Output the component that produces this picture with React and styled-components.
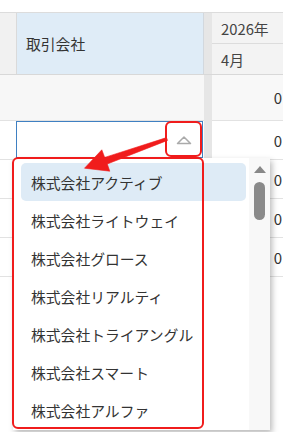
import React from "react";
import styled, { createGlobalStyle } from "styled-components";

const GlobalStyle = createGlobalStyle`
  body {
    margin: 0;
    background: #fff;
    font-family: "Noto Sans CJK JP", "Noto Sans", sans-serif;
    color: #333;
  }
`;

const Page = styled.div`
  position: relative;
  width: 283px;
  height: 432px;
  overflow: hidden;
  padding-top: 12px;
  box-sizing: border-box;
`;

const Sheet = styled.div`
  border-top: 1px solid #dcdcdc;
`;

const HeaderRow = styled.div`
  display: flex;
  height: 62px;
  box-sizing: border-box;
  border-bottom: 1px solid #d8d8d8;
`;

const Corner = styled.div`
  width: 17px;
  flex: none;
  box-sizing: border-box;
  background: #f1f1f1;
  border-right: 1px solid #dadada;
`;

const CompanyHead = styled.div`
  width: 187px;
  flex: none;
  box-sizing: border-box;
  display: flex;
  align-items: center;
  padding-left: 9px;
  background: #dfecf7;
  border-right: 1px solid #d2d8de;
  font-size: 14.8px;
`;

const Divider = styled.div`
  width: 8px;
  flex: none;
  background: #e6e6e6;
`;

const PeriodHead = styled.div`
  flex: 1;
  display: flex;
  flex-direction: column;
  background: #f3f3f3;
`;

const PeriodCell = styled.div`
  flex: 1;
  display: flex;
  align-items: center;
  padding-left: 9px;
  font-size: 14.8px;
  color: #444;
  border-bottom: ${(p) => (p.$first ? "1px solid #dcdcdc" : "none")};
`;

const Row = styled.div`
  display: flex;
  height: ${(p) => p.$height}px;
`;

const Lead = styled.div`
  width: 17px;
  flex: none;
  box-sizing: border-box;
  background: ${(p) => (p.$shade ? "#f7f7f7" : "#fff")};
  border-bottom: 1px solid #e2e2e2;
`;

const CompanyCell = styled.div`
  width: 187px;
  flex: none;
  box-sizing: border-box;
  background: ${(p) => (p.$shade ? "#f7f7f7" : "#fff")};
  border-bottom: 1px solid #e2e2e2;
`;

const ValueCell = styled.div`
  flex: 1;
  box-sizing: border-box;
  display: flex;
  align-items: center;
  justify-content: flex-end;
  padding-right: 1px;
  font-size: 15px;
  background: ${(p) => (p.$shade ? "#f8f8f8" : "#fff")};
  border-bottom: 1px solid #e2e2e2;
`;

const SelectWrap = styled.div`
  position: relative;
  width: 187px;
  height: 37px;
  margin-left: -1px;
  box-sizing: border-box;
  border: 1px solid #3f80c2;
  background: #fff;
  display: flex;
  justify-content: flex-end;
  align-items: center;
`;

const Toggle = styled.div`
  width: 36px;
  height: 100%;
  display: flex;
  align-items: center;
  justify-content: center;
`;

const Dropdown = styled.div`
  position: absolute;
  z-index: 10;
  top: 36px;
  left: -4px;
  width: 257px;
  height: 272px;
  display: flex;
  background: #fff;
  box-shadow: 2px 3px 6px rgba(0, 0, 0, 0.28);
`;

const List = styled.div`
  flex: 1;
  padding: 5px 3px 0 8px;
`;

const Item = styled.div`
  height: 38px;
  display: flex;
  align-items: center;
  padding-left: 10px;
  border-radius: 5px;
  font-size: 14.8px;
  color: #333;
  white-space: nowrap;
  background: ${(p) => (p.$active ? "#deebf6" : "transparent")};
`;

const ScrollTrack = styled.div`
  width: 21px;
  flex: none;
  background: #f8f8f8;
  display: flex;
  flex-direction: column;
  align-items: center;
  padding-top: 8px;
`;

const ScrollArrow = styled.div`
  width: 0;
  height: 0;
  border-left: 6.5px solid transparent;
  border-right: 6.5px solid transparent;
  border-bottom: 7px solid #888;
`;

const ScrollThumb = styled.div`
  margin-top: 9px;
  width: 11px;
  height: 38px;
  border-radius: 6px;
  background: #8a8a8a;
`;

const Highlight = styled.div`
  position: absolute;
  z-index: 20;
  left: ${(p) => p.$x}px;
  top: ${(p) => p.$y}px;
  width: ${(p) => p.$w}px;
  height: ${(p) => p.$h}px;
  box-sizing: border-box;
  border: 2px solid #f01c1c;
  border-radius: 6px;
  pointer-events: none;
`;

const Overlay = styled.svg`
  position: absolute;
  z-index: 21;
  left: 0;
  top: 0;
  pointer-events: none;
`;

const companies = [
  "株式会社アクティブ",
  "株式会社ライトウェイ",
  "株式会社グロース",
  "株式会社リアルティ",
  "株式会社トライアングル",
  "株式会社スマート",
  "株式会社アルファ",
];

const App = () => {
  return (
    <>
      <GlobalStyle />
      <Page>
        <Sheet>
          <HeaderRow>
            <Corner />
            <CompanyHead>取引会社</CompanyHead>
            <Divider />
            <PeriodHead>
              <PeriodCell $first>2026年</PeriodCell>
              <PeriodCell>4月</PeriodCell>
            </PeriodHead>
          </HeaderRow>

          <Row $height={46}>
            <Lead $shade />
            <CompanyCell $shade />
            <Divider />
            <ValueCell $shade>0</ValueCell>
          </Row>

          <Row $height={39}>
            <Lead />
            <CompanyCell>
              <SelectWrap>
                <Toggle>
                  <svg width="16" height="10" viewBox="0 0 16 10">
                    <path
                      d="M1.5 8.5 L8 2 L14.5 8.5 Z"
                      fill="none"
                      stroke="#aaa"
                      strokeWidth="1.5"
                      strokeLinejoin="round"
                    />
                  </svg>
                </Toggle>
                <Dropdown>
                  <List>
                    {companies.map((name, i) => (
                      <Item key={name} $active={i === 0}>
                        {name}
                      </Item>
                    ))}
                  </List>
                  <ScrollTrack>
                    <ScrollArrow />
                    <ScrollThumb />
                  </ScrollTrack>
                </Dropdown>
              </SelectWrap>
            </CompanyCell>
            <Divider />
            <ValueCell>0</ValueCell>
          </Row>

          {[0, 1, 2].map((i) => (
            <Row key={i} $height={39}>
              <Lead />
              <CompanyCell />
              <Divider />
              <ValueCell>0</ValueCell>
            </Row>
          ))}
        </Sheet>

        <Highlight $x={165} $y={121} $w={37} $h={36} />
        <Highlight $x={12} $y={157} $w={192} $h={272} />

        <Overlay width="283" height="432" viewBox="0 0 283 432">
          <polygon
            points="166.5,137.6 104.7,157.4 101.8,149.8 84.5,168.2 109.8,171.2 107.3,164 167.5,140.4"
            fill="#f01c1c"
            stroke="#f01c1c"
            strokeWidth="0.6"
            strokeLinejoin="round"
          />
        </Overlay>
      </Page>
    </>
  );
};

export default App;
